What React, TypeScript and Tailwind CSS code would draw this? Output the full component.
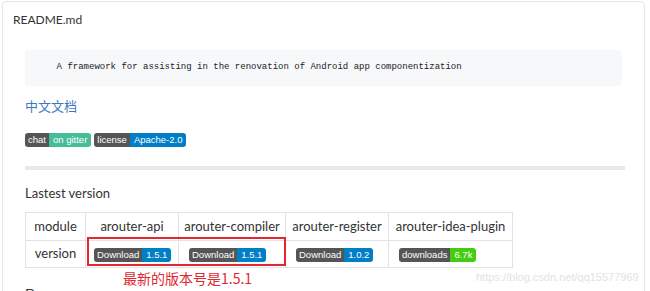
import React from 'react';

const Badge: React.FC<{ label: string; value: string; color: string }> = ({ label, value, color }) => (
  <span className="inline-flex h-[14px] overflow-hidden rounded-[3px] text-[9.5px] leading-[14px] text-white font-['Liberation_Sans',sans-serif]">
    <span className="bg-[#555] px-[3px]">{label}</span>
    <span className={`px-[4px] ${color}`}>{value}</span>
  </span>
);

const cols = ['arouter-api', 'arouter-compiler', 'arouter-register', 'arouter-idea-plugin'];
const widths = ['w-[93px]', 'w-[107px]', 'w-[103px]', 'w-[124px]'];

export default function App() {
  return (
    <div className="relative h-[291px] w-[650px] overflow-hidden bg-white font-['Lato',sans-serif] text-[#333]">
      <div className="ml-[2px] mt-[1px] h-[310px] w-[643px] rounded-[4px] border border-[#e6e6e6]">
        <div className="px-[10px] pt-[10px] text-[12px] leading-[16px]">README.md</div>

        <div className="px-[22px] pt-[22px]">
          <div className="flex h-[36px] items-center rounded-[3px] bg-[#f6f8fa] pl-[10px] font-['Liberation_Mono',monospace] text-[9px] text-[#222] whitespace-pre">
            {'    A framework for assisting in the renovation of Android app componentization'}
          </div>

          <div className="mt-[12px] text-[13px] leading-[16px] text-[#4078c0] font-['Noto_Sans_CJK_SC',sans-serif]">中文文档</div>

          <div className="mt-[19px] flex gap-[3px]">
            <Badge label="chat" value="on gitter" color="bg-[#46bc99]" />
            <Badge label="license" value="Apache-2.0" color="bg-[#007ec6]" />
          </div>

          <div className="mt-[19px] h-[4px] w-[600px] bg-[#e7e7ec]" />

          <div className="mt-[14px] text-[13px] leading-[18px]">Lastest version</div>

          <table className="mt-[10px] w-[487px] table-fixed border-collapse text-[13px] text-[#333]">
            <tbody>
              <tr className="h-[28px]">
                <td className="w-[60px] border border-[#e2e2e2] text-center">module</td>
                {cols.map((c, i) => (
                  <td key={c} className={`${widths[i]} border border-[#e2e2e2] text-center`}>{c}</td>
                ))}
              </tr>
              <tr className="h-[27px]">
                <td className="border border-[#e2e2e2] text-center">version</td>
                <td className="border border-[#e2e2e2] pl-[8px]"><Badge label="Download" value="1.5.1" color="bg-[#007ec6]" /></td>
                <td className="border border-[#e2e2e2] pl-[10px]"><Badge label="Download" value="1.5.1" color="bg-[#007ec6]" /></td>
                <td className="border border-[#e2e2e2] pl-[10px]"><Badge label="Download" value="1.0.2" color="bg-[#007ec6]" /></td>
                <td className="border border-[#e2e2e2] pl-[10px]"><Badge label="downloads" value="6.7k" color="bg-[#4c1]" /></td>
              </tr>
            </tbody>
          </table>

          <div className="mt-[18px] text-[14px] leading-[16px]">Demo</div>
        </div>
      </div>

      {/* annotation overlay */}
      <div className="absolute left-[87px] top-[237px] h-[29px] w-[199px] border-2 border-[#e0282e]" />
      <div className="absolute left-[123px] top-[269px] text-[14px] leading-[18px] text-[#e0282e] font-['Noto_Sans_CJK_SC',sans-serif]">最新的版本号是1.5.1</div>
      <div className="absolute left-[476px] top-[270px] text-[11px] leading-[14px] text-[#e3e3e3] font-['Liberation_Sans',sans-serif]">https://blog.csdn.net/qq15577969</div>
    </div>
  );
}
